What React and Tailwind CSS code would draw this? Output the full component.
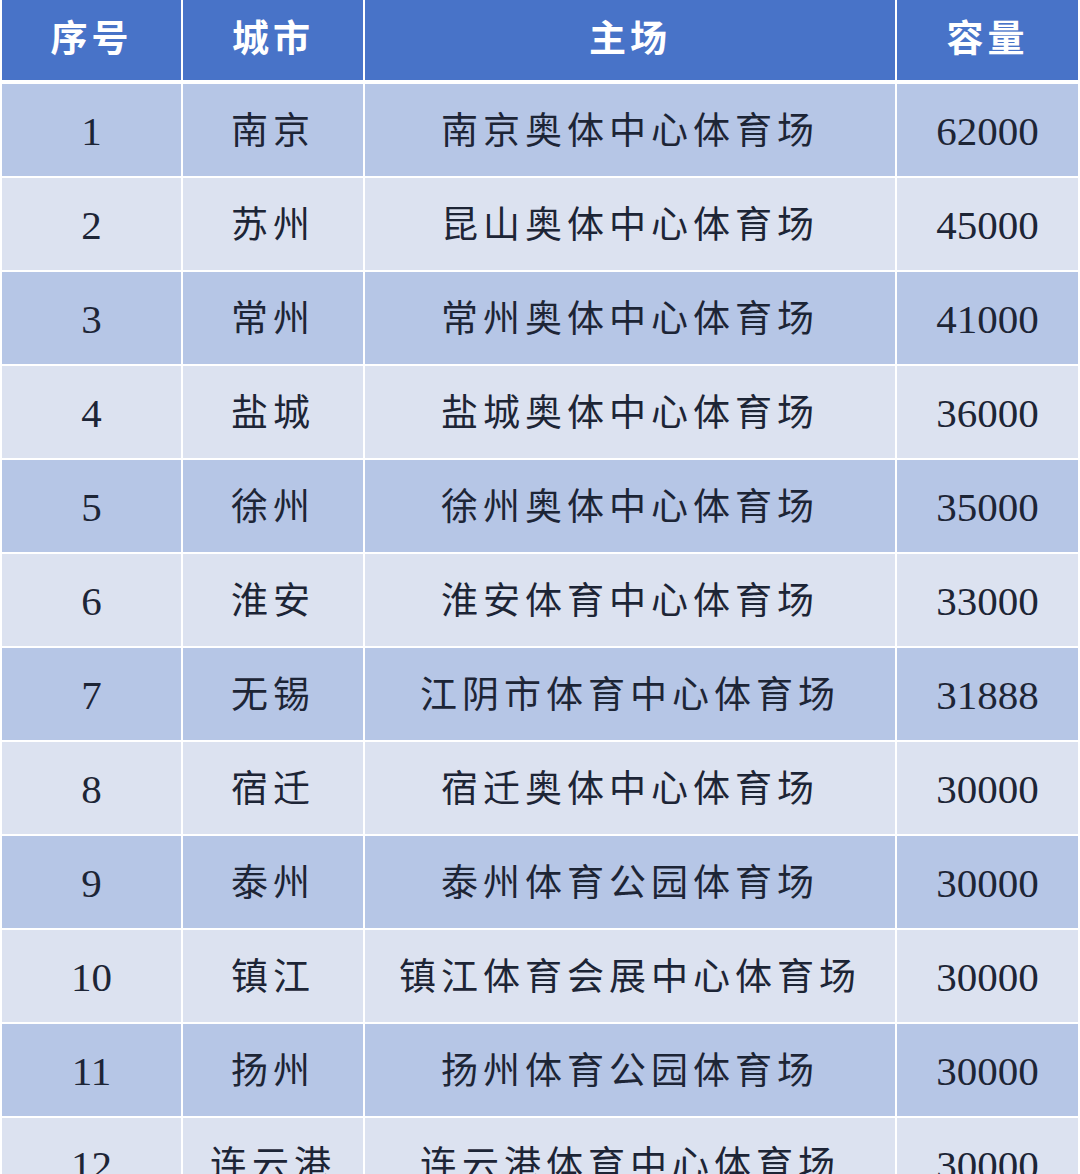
import React from 'react';

const rows = [
  ['1', '南京', '南京奥体中心体育场', '62000'],
  ['2', '苏州', '昆山奥体中心体育场', '45000'],
  ['3', '常州', '常州奥体中心体育场', '41000'],
  ['4', '盐城', '盐城奥体中心体育场', '36000'],
  ['5', '徐州', '徐州奥体中心体育场', '35000'],
  ['6', '淮安', '淮安体育中心体育场', '33000'],
  ['7', '无锡', '江阴市体育中心体育场', '31888'],
  ['8', '宿迁', '宿迁奥体中心体育场', '30000'],
  ['9', '泰州', '泰州体育公园体育场', '30000'],
  ['10', '镇江', '镇江体育会展中心体育场', '30000'],
  ['11', '扬州', '扬州体育公园体育场', '30000'],
  ['12', '连云港', '连云港体育中心体育场', '30000'],
];

const headers = ['序号', '城市', '主场', '容量'];

const App = () => {
  return (
    <div className="w-[1080px] h-[1174px] overflow-hidden bg-white">
      <div className="w-[1078px] pl-[2px] bg-white">
        {/* Header */}
        <div className="grid grid-cols-[179px_180px_530px_181px] gap-x-[2px] mb-[4px]">
          {headers.map((h) => (
            <div
              key={h}
              className="h-[80px] bg-[#4873c8] flex items-center justify-center text-white text-[37px] font-bold tracking-[4px] pb-[6px]"
              style={{ fontFamily: '"Noto Sans CJK SC", sans-serif' }}
            >
              {h}
            </div>
          ))}
        </div>

        {/* Body */}
        <div className="flex flex-col gap-[2px]">
          {rows.map((r, i) => {
            const bg = i % 2 === 0 ? 'bg-[#b6c6e6]' : 'bg-[#dce2f0]';
            return (
              <div key={r[0]} className="grid grid-cols-[179px_180px_530px_181px] gap-x-[2px]">
                {r.map((cell, j) => (
                  <div
                    key={j}
                    className={`h-[92px] ${bg} flex items-center justify-center pt-[3px] text-[#1d2536] ${
                      j === 0 || j === 3 ? 'text-[41px]' : 'text-[37px] tracking-[5px]'
                    }`}
                    style={{ fontFamily: '"Liberation Serif", "Noto Sans CJK SC", serif' }}
                  >
                    {cell}
                  </div>
                ))}
              </div>
            );
          })}
        </div>
      </div>
    </div>
  );
};

export default App;
